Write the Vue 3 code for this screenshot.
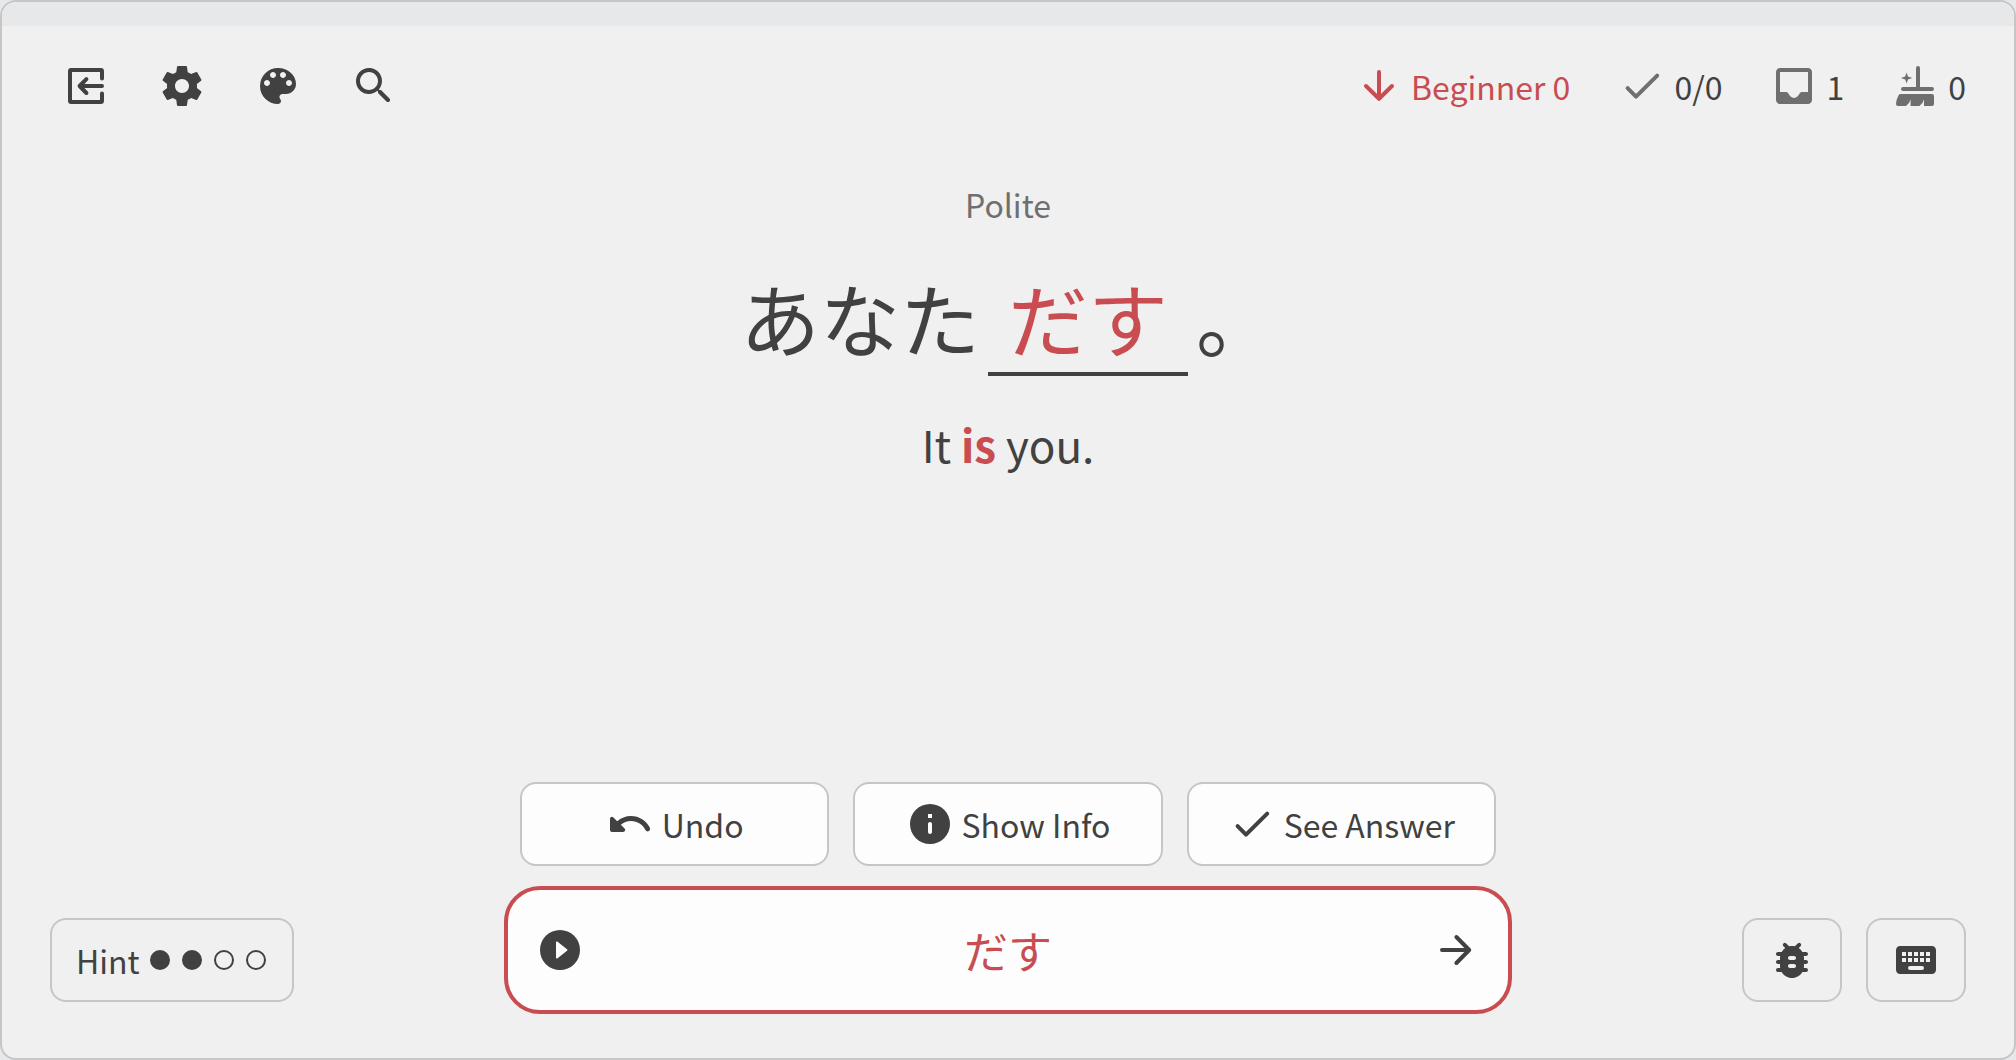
<script setup>
import { ref } from 'vue'

const answer = ref('だす')

const icons = {
  exit: 'M20 8.2V4.6Q20 4 19.4 4H4.6Q4 4 4 4.6V19.4Q4 20 4.6 20H19.4Q20 20 20 19.4V15.8M20 12H9M12.2 8.6L8.8 12l3.4 3.5',
  gear: 'M19.43 12.98c.04-.32.07-.64.07-.98s-.03-.66-.07-.98l2.11-1.65c.19-.15.24-.42.12-.64l-2-3.46c-.12-.22-.39-.3-.61-.22l-2.49 1c-.52-.4-1.08-.73-1.69-.98l-.38-2.65C14.46 2.18 14.25 2 14 2h-4c-.25 0-.46.18-.49.42l-.38 2.65c-.61.25-1.17.59-1.69.98l-2.49-1c-.23-.09-.49 0-.61.22l-2 3.46c-.13.22-.07.49.12.64l2.11 1.65c-.04.32-.07.65-.07.98s.03.66.07.98l-2.11 1.65c-.19.15-.24.42-.12.64l2 3.46c.12.22.39.3.61.22l2.49-1c.52.4 1.08.73 1.69.98l.38 2.65c.03.24.24.42.49.42h4c.25 0 .46-.18.49-.42l.38-2.65c.61-.25 1.17-.59 1.69-.98l2.49 1c.23.09.49 0 .61-.22l2-3.46c.12-.22.07-.49-.12-.64l-2.11-1.65zM12 15.5c-1.93 0-3.5-1.57-3.5-3.5s1.57-3.5 3.5-3.5 3.5 1.57 3.5 3.5-1.57 3.5-3.5 3.5z',
  palette: 'M12 3a9 9 0 0 0 0 18c.83 0 1.5-.67 1.5-1.5 0-.39-.15-.74-.39-1.01-.23-.26-.38-.61-.38-.99 0-.83.67-1.5 1.5-1.5H16c2.76 0 5-2.24 5-5 0-4.42-4.03-8-9-8zm-5.5 9c-.83 0-1.5-.67-1.5-1.5S5.67 9 6.5 9 8 9.67 8 10.5 7.33 12 6.5 12zm3-4C8.67 8 8 7.33 8 6.5S8.67 5 9.5 5s1.5.67 1.5 1.5S10.33 8 9.5 8zm5 0c-.83 0-1.5-.67-1.5-1.5S13.67 5 14.5 5s1.5.67 1.5 1.5S15.33 8 14.5 8zm3 4c-.83 0-1.5-.67-1.5-1.5S16.67 9 17.5 9s1.5.67 1.5 1.5-.67 1.5-1.5 1.5z',
  search: 'M15.5 14h-.79l-.28-.27c1.2-1.4 1.82-3.31 1.48-5.34-.47-2.78-2.79-5-5.59-5.34-4.23-.52-7.79 3.04-7.27 7.27.34 2.8 2.56 5.12 5.34 5.59 2.03.34 3.94-.28 5.34-1.48l.27.28v.79l4.25 4.25c.41.41 1.08.41 1.49 0 .41-.41.41-1.08 0-1.49L15.5 14zm-6 0C7.01 14 5 11.99 5 9.5S7.01 5 9.5 5 14 7.01 14 9.5 11.99 14 9.5 14z',
  down: 'M12 5v13.4M5.5 12l6.5 6.4 6.5-6.4',
  check: 'M4.8 13.1L9 17.3 19.6 6.8',
  inbox: 'M19 3H5c-1.1 0-2 .9-2 2v14c0 1.1.9 2 2 2h14c1.1 0 2-.9 2-2V5c0-1.1-.9-2-2-2zm0 12h-3.1c-.5 0-.8.3-1.1.8-.5 1.1-1.5 2.2-2.8 2.2s-2.3-1.1-2.8-2.2c-.3-.5-.6-.8-1.1-.8H5V5h14v10z',
  broom: 'M12 12.5V3q0-1 1-1t1 1v9.5h6q1 0 1 1t-1 1H5.5q-1 0-1-1t1-1zM4.4 16H20q1 0 1 1v4q0 1-1 1h-4v-3.2q-.5 2-2.3 3.2H9.3v-3.2q-.5 2-2.3 3.2H3q-1.1 0-1-1.1.2-2.3 1.2-4.2.4-.7 1.2-.7zM7.3 5.2l.7 2.1 2.1.7-2.1.7-.7 2.1-.7-2.1L4.5 8l2.1-.7z',
  undo: 'M12.5 8c-2.65 0-5.05.99-6.9 2.6L3.71 8.71C3.08 8.08 2 8.52 2 9.41V15c0 .55.45 1 1 1h5.59c.89 0 1.34-1.08.71-1.71l-1.91-1.91c1.39-1.16 3.16-1.88 5.12-1.88 3.16 0 5.89 1.84 7.19 4.5.27.56.91.84 1.5.64.71-.23 1.07-1.04.75-1.72C20.23 10.42 16.65 8 12.5 8z',
  info: 'M12 2a10 10 0 1 0 0 20 10 10 0 0 0 0-20zm0 15c-.55 0-1-.45-1-1v-4c0-.55.45-1 1-1s1 .45 1 1v4c0 .55-.45 1-1 1zm1-8h-2V7h2z',
  play: 'M12 2a10 10 0 1 0 0 20 10 10 0 0 0 0-20zm-2 13.7V8.3c0-.4.47-.65.8-.4l4.7 3.7c.27.2.27.6 0 .8l-4.7 3.7c-.33.25-.8 0-.8-.4z',
  next: 'M5 12h13.4M12.2 5.5l6.4 6.5-6.4 6.5',
  bug: 'M19 8h-1.81c-.45-.78-1.07-1.45-1.82-1.96l.93-.93c.39-.39.39-1.02 0-1.41-.39-.39-1.02-.39-1.41 0l-1.47 1.47C12.96 5.06 12.49 5 12 5s-.96.06-1.41.17L9.11 3.7c-.39-.39-1.02-.39-1.41 0-.39.39-.39 1.02 0 1.41l.92.93C7.88 6.55 7.26 7.22 6.81 8H5c-.55 0-1 .45-1 1s.45 1 1 1h1.09c-.05.33-.09.66-.09 1v1H5c-.55 0-1 .45-1 1s.45 1 1 1h1v1c0 .34.04.67.09 1H5c-.55 0-1 .45-1 1s.45 1 1 1h1.81c1.04 1.79 2.97 3 5.19 3s4.15-1.21 5.19-3H19c.55 0 1-.45 1-1s-.45-1-1-1h-1.09c.05-.33.09-.66.09-1v-1h1c.55 0 1-.45 1-1s-.45-1-1-1h-1v-1c0-.34-.04-.67-.09-1H19c.55 0 1-.45 1-1s-.45-1-1-1zm-6 8h-2c-.55 0-1-.45-1-1s.45-1 1-1h2c.55 0 1 .45 1 1s-.45 1-1 1zm0-4h-2c-.55 0-1-.45-1-1s.45-1 1-1h2c.55 0 1 .45 1 1s-.45 1-1 1z',
  keyboard: 'M20 5H4c-1.1 0-2 .9-2 2v10c0 1.1.9 2 2 2h16c1.1 0 2-.9 2-2V7c0-1.1-.9-2-2-2zM5 8h2v2H5zM8 8h2v2H8zM11 8h2v2h-2zM14 8h2v2h-2zM17 8h2v2h-2zM5 11h2v2H5zM8 11h2v2H8zM11 11h2v2h-2zM14 11h2v2h-2zM17 11h2v2h-2zM9 15h6q1 0 1 1t-1 1H9q-1 0-1-1t1-1z'
}

const tools = [
  { name: 'Quit', icon: 'exit', line: true },
  { name: 'Settings', icon: 'gear' },
  { name: 'Theme', icon: 'palette' },
  { name: 'Search', icon: 'search' }
]
const stats = [
  { icon: 'down', line: true, text: 'Beginner 0', accent: true },
  { icon: 'check', line: true, text: '0/0' },
  { icon: 'inbox', text: '1' },
  { icon: 'broom', text: '0' }
]
const actions = [
  { icon: 'undo', text: 'Undo' },
  { icon: 'info', text: 'Show Info' },
  { icon: 'check', line: true, text: 'See Answer' }
]
const extras = [
  { name: 'Report a bug', icon: 'bug' },
  { name: 'Keyboard', icon: 'keyboard' }
]
const hints = [true, true, false, false]
</script>

<template>
  <div class="window">
    <div class="strip"></div>
    <header class="header">
      <nav class="tools">
        <button v-for="t in tools" :key="t.name" type="button" class="tool" :aria-label="t.name">
          <svg class="icon" :class="{ line: t.line }" viewBox="0 0 24 24"><path :d="icons[t.icon]" /></svg>
        </button>
      </nav>
      <div class="stats">
        <div v-for="s in stats" :key="s.icon" class="stat" :class="{ accent: s.accent }">
          <svg class="icon" :class="{ line: s.line }" viewBox="0 0 24 24"><path :d="icons[s.icon]" /></svg>
          <span>{{ s.text }}</span>
        </div>
      </div>
    </header>

    <main class="question">
      <p class="form">Polite</p>
      <p class="sentence" lang="ja"><span>あなた</span><span class="blank">だす</span><span>。</span></p>
      <p class="meaning">It <strong>is</strong> you.</p>
    </main>

    <footer class="footer">
      <div class="side">
        <button type="button" class="box hint">
          <span>Hint</span>
          <span class="dots">
            <svg v-for="(used, i) in hints" :key="i" class="dot" :class="{ used }" viewBox="0 0 24 24"><circle cx="12" cy="12" r="9" /></svg>
          </span>
        </button>
      </div>
      <div class="center">
        <div class="actions">
          <button v-for="a in actions" :key="a.text" type="button" class="box action">
            <svg class="icon" :class="{ line: a.line }" viewBox="0 0 24 24"><path :d="icons[a.icon]" /></svg>
            <span>{{ a.text }}</span>
          </button>
        </div>
        <form class="answer" @submit.prevent>
          <button type="button" class="tool" aria-label="Play">
            <svg class="icon" viewBox="0 0 24 24"><path :d="icons.play" /></svg>
          </button>
          <input v-model="answer" class="field" type="text" lang="ja" aria-label="Answer" />
          <button type="submit" class="tool" aria-label="Next">
            <svg class="icon line" viewBox="0 0 24 24"><path :d="icons.next" /></svg>
          </button>
        </form>
      </div>
      <div class="side end">
        <button v-for="e in extras" :key="e.name" type="button" class="box extra" :aria-label="e.name">
          <svg class="icon" viewBox="0 0 24 24"><path :d="icons[e.icon]" /></svg>
        </button>
      </div>
    </footer>
  </div>
</template>

<style>
body {
  margin: 0;
  background: #e6e8ea;
}
</style>

<style scoped>
.window {
  box-sizing: border-box;
  min-height: 100vh;
  display: flex;
  flex-direction: column;
  overflow: hidden;
  border: 2px solid #c6c6c6;
  border-radius: 16px;
  background: #f0f0f0;
  color: #414141;
  font-family: "Noto Sans CJK JP", sans-serif;
  font-size: 32px;
  line-height: 48px;
}
button,
input {
  margin: 0;
  padding: 0;
  border: 0;
  background: none;
  color: inherit;
  font: inherit;
}
.strip {
  height: 24px;
  background: #e6e8ea;
}
.header {
  display: flex;
  justify-content: space-between;
  padding: 36px 48px 0 60px;
}
.tools,
.stats {
  display: flex;
  gap: 48px;
}
.tool {
  flex: none;
  width: 48px;
  height: 48px;
}
.icon {
  display: block;
  flex: none;
  width: 48px;
  height: 48px;
  fill: currentColor;
  fill-rule: evenodd;
}
.icon.line {
  fill: none;
  stroke: currentColor;
  stroke-width: 2;
  stroke-linecap: round;
  stroke-linejoin: round;
}
.stat {
  display: flex;
  gap: 8px;
}
.stat .icon {
  color: #6f6f6f;
}
.accent,
.stat.accent .icon {
  color: #c84c50;
}
.question {
  flex: 1;
  display: flex;
  flex-direction: column;
  align-items: center;
  padding-top: 70px;
}
.question p {
  margin: 0;
}
.form {
  color: #6f6f6f;
}
.question .sentence {
  display: flex;
  margin-top: 32px;
  font-size: 80px;
  line-height: 112px;
}
.blank {
  margin: 0 8px;
  padding: 0 20px;
  border-bottom: 4px solid #414141;
  color: #c84c50;
}
.question .meaning {
  margin-top: 36px;
  font-size: 44px;
  line-height: 64px;
}
.meaning strong {
  color: #c84c50;
}
.footer {
  display: grid;
  grid-template-columns: 1fr 50vw 1fr;
  align-items: end;
  padding: 0 48px 44px;
}
.side {
  display: flex;
  gap: 24px;
  padding-bottom: 12px;
}
.end {
  justify-content: flex-end;
}
.box {
  box-sizing: border-box;
  display: flex;
  align-items: center;
  justify-content: center;
  gap: 8px;
  height: 84px;
  border: 2px solid #c6c6c6;
  border-radius: 16px;
}
.hint {
  padding: 0 24px;
}
.dots {
  display: flex;
  gap: 8px;
}
.dot {
  width: 24px;
  height: 24px;
  fill: none;
  stroke: #414141;
  stroke-width: 2;
}
.dot.used {
  fill: #414141;
}
.extra {
  width: 100px;
}
.actions {
  display: grid;
  grid-template-columns: repeat(3, 1fr);
  gap: 24px;
  padding: 0 16px 20px;
}
.action {
  background: #fdfdfd;
}
.answer {
  box-sizing: border-box;
  display: flex;
  align-items: center;
  height: 128px;
  padding: 0 28px;
  border: 4px solid #c84c50;
  border-radius: 36px;
  background: #fdfdfd;
}
.field {
  flex: 1;
  min-width: 0;
  height: 72px;
  outline: 0;
  color: #c84c50;
  font-size: 44px;
  text-align: center;
}
</style>
